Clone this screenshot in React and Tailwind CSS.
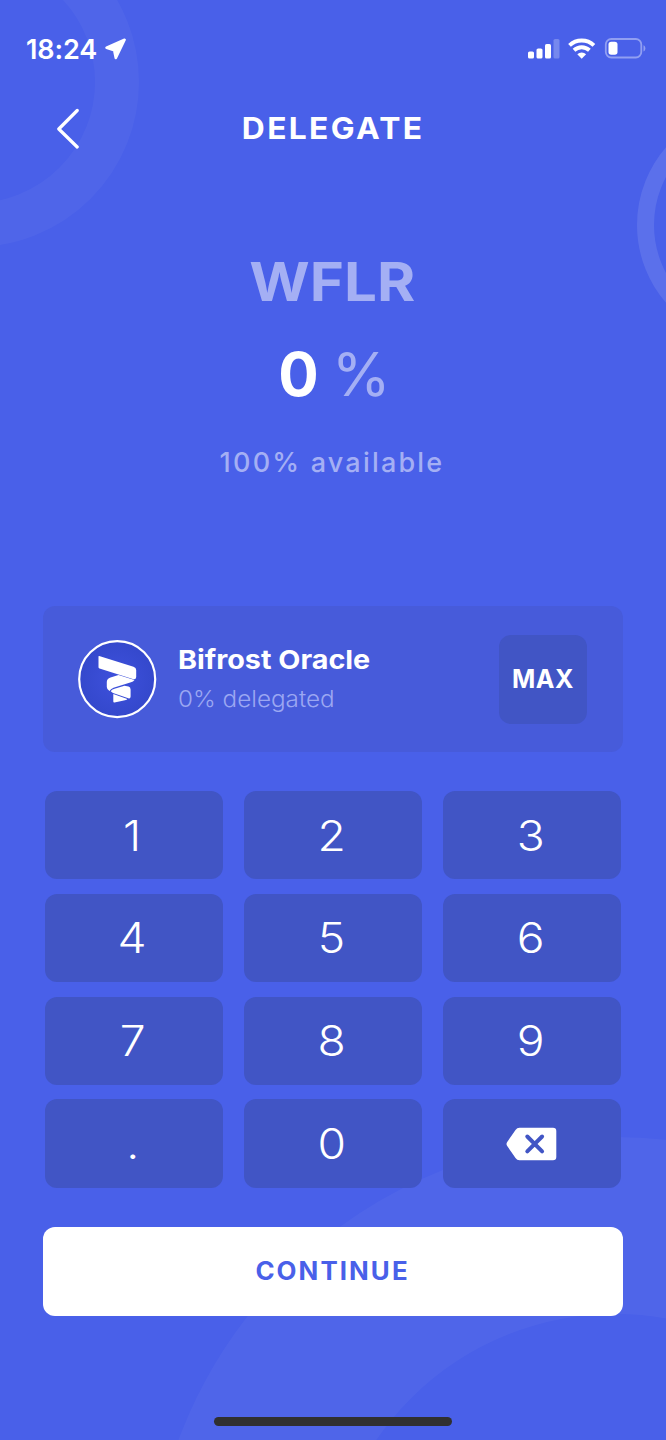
import React, { useState } from 'react'

const keys = ['1', '2', '3', '4', '5', '6', '7', '8', '9', '.', '0', 'del']

const Rings = () => (
  <svg className="absolute inset-0" width="666" height="1440" fill="none" stroke="#fff">
    <circle cx="-26" cy="82" r="143" strokeWidth="44" strokeOpacity="0.035" />
    <circle cx="756" cy="225" r="110.5" strokeWidth="17" strokeOpacity="0.1" />
    <circle cx="615" cy="1603" r="377.5" strokeWidth="177" strokeOpacity="0.035" />
  </svg>
)

const StatusBar = () => (
  <div className="flex h-24 items-center justify-between pt-0.5 pr-5 pl-[26px]">
    <div className="flex items-center gap-2">
      <span className="text-[27px] leading-none font-semibold tracking-[-0.100px]">18:24</span>
      <svg width="22" height="22" viewBox="0 0 22 22" fill="#fff" stroke="#fff" strokeWidth="2.6" strokeLinejoin="round">
        <path d="M19.600 1.800 1.600 9.800 9.200 12.200 10.800 19.900Z" />
      </svg>
    </div>
    <div className="flex items-center">
      <svg width="118" height="22" viewBox="0 0 118 22" fill="#fff">
        <rect x="0" y="13.500" width="6" height="7" rx="1.600" />
        <rect x="8.500" y="10.500" width="6" height="10" rx="1.600" />
        <rect x="17" y="6" width="6" height="14.500" rx="1.600" />
        <rect x="25.500" y="1" width="6" height="19.500" rx="1.600" opacity="0.250" />
        <g fill="none" stroke="#fff" strokeWidth="3.900">
          <path d="M41.500 7.400A17.600 17.600 0 0 1 65.900 7.400" />
          <path d="M46 12.300A11.300 11.300 0 0 1 61.400 12.300" />
        </g>
        <path d="M49.300 16.200A6.300 6.300 0 0 1 58.100 16.200L53.700 20.800Z" />
        <rect x="77.800" y="1" width="35.500" height="18.500" rx="5.500" fill="none" stroke="#fff" strokeWidth="1.800" opacity="0.400" />
        <rect x="80.500" y="3.800" width="9" height="13" rx="2.800" />
        <path d="M115.500 7.300C118 8.500 118 12.300 115.500 13.500Z" opacity="0.400" />
      </svg>
    </div>
  </div>
)

const OracleLogo = () => (
  <svg width="79" height="79" viewBox="0 0 79 79">
    <defs>
      <radialGradient id="badge">
        <stop offset="0" stopColor="#3e51dc" />
        <stop offset="1" stopColor="#3448cc" />
      </radialGradient>
    </defs>
    <circle cx="39.200" cy="39.200" r="38" fill="url(#badge)" stroke="#fff" strokeWidth="2.200" />
    {/* folded ribbon */}
    <g fill="#fff">
      <path d="M20.500 16.500Q20.500 15.800 21.200 16L55.500 26.700Q58.200 27.600 58.200 30V37Q58 39.700 55.500 39.200L21.500 28.500Q20.500 28.200 20.500 27.200Z" />
      <path d="M40.500 35 56.500 40Q55.200 41.700 53 42.300L35.500 47.800Q32.500 49 31.500 51 28.800 49.500 28.800 47V42Q28.800 38.500 32.500 37.500Z" />
      <path d="M32.700 51.200Q33.500 49.700 36.500 48.800L46.500 45.700 50.500 46.500Q52.600 47 52.600 49.500V56.500Q52.400 59.200 50.300 58.300L35 53Z" />
      <path d="M35.300 54 49.300 59Q49.200 60 47 60.300L36.500 62.500Q35.300 62.700 35.300 61.500Z" />
    </g>
  </svg>
)

const DeleteIcon = () => (
  <svg width="51" height="34" viewBox="0 0 51 34">
    <path d="M13.500.8H47Q50.300.8 50.300 4V30Q50.300 33.200 47 33.200H13.500Q11 33.200 9.500 31L1.200 19Q-.2 17 1.200 15L9.500 3Q11 .8 13.500.8Z" fill="#fff" />
    <path d="m21.300 9.500 14.800 14.800m0-14.800L21.300 24.300" stroke="#4155c5" strokeWidth="4" strokeLinecap="round" />
  </svg>
)

export default function App() {
  const [amount, setAmount] = useState('0')

  function pressKey(key) {
    if (key === 'del') {
      setAmount(amount.length > 1 ? amount.slice(0, -1) : '0')
      return
    }
    setAmount(amount === '0' && key !== '.' ? key : amount + key)
  }

  return (
    <div className="relative h-[1440px] w-[666px] overflow-hidden bg-[#4960e9] font-['Inter',sans-serif] text-white">
      <Rings />
      <div className="relative flex h-full flex-col">
        <StatusBar />

        <header className="grid h-16 grid-cols-[1fr_auto_1fr] items-center px-14">
          <button className="justify-self-start">
            <svg width="24" height="42" viewBox="0 0 24 42" fill="none" stroke="#fff" strokeWidth="3.200" strokeLinecap="round" strokeLinejoin="round">
              <path d="M21.200 3.500 2.800 22 21.200 40" />
            </svg>
          </button>
          <h1 className="scale-x-[1.060] text-[30px] leading-none font-bold tracking-[2.200px]">DELEGATE</h1>
        </header>

        <section className="flex h-[446px] flex-col items-center pt-[94px]">
          <h2 className="h-14 scale-x-110 pr-0.5 text-[53px] leading-14 font-bold text-[#a4aff4]">WFLR</h2>
          <p className="mt-7 flex h-[72px] items-center gap-[13px] pl-[3px] text-[60px] leading-none">
            <span className="font-bold">{amount}</span>
            <span className="text-[#a4aff4]">%</span>
          </p>
          <p className="mt-[35px] pr-0.5 text-[27px] leading-9 font-medium tracking-[2.200px] text-[#a4aff4]">100% available</p>
        </section>

        <section className="mx-[43px] flex h-[146px] items-center rounded-xl bg-[#475bda] pr-9 pl-[35px]">
          <OracleLogo />
          <div className="ml-[21px] flex-1">
            <h3 className="origin-left scale-x-[1.105] pt-px text-[26px] leading-9 font-bold">Bifrost Oracle</h3>
            <p className="mt-[3px] origin-left scale-x-[1.055] text-[23px] leading-9 font-light text-[#9ba7f2]">0% delegated</p>
          </div>
          <button className="h-[89px] w-[88px] rounded-xl bg-[#4155c5] pt-0.5 text-[25px] font-bold tracking-[0.500px]">MAX</button>
        </section>

        <section className="mx-[45px] mt-[39px] grid grid-cols-3 gap-x-[21px] gap-y-[14.400px]">
          {keys.map((key) => (
            <button
              key={key}
              className="flex h-[88.400px] items-center justify-center rounded-xl bg-[#4155c5] pr-px text-[42px] leading-none font-light"
              onClick={() => pressKey(key)}
            >
              {key === 'del' ? <DeleteIcon /> : <span className="scale-x-110 pt-px pr-0.5">{key}</span>}
            </button>
          ))}
        </section>

        <button className="mx-[43px] mt-[39px] h-[89px] rounded-xl bg-white pt-0.5 text-[25px] font-bold tracking-[2px] text-[#4960e9]">
          <span className="inline-block scale-x-[1.035]">CONTINUE</span>
        </button>
        <div className="mt-auto mb-3.5 h-[9px] w-[238px] self-center rounded-full bg-[#303030]" />
      </div>
    </div>
  )
}
